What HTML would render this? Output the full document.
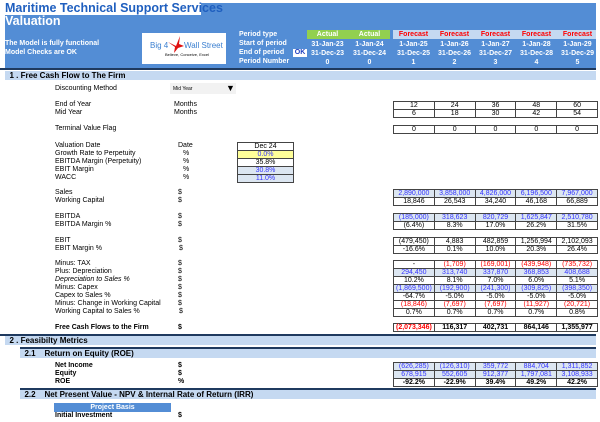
<!DOCTYPE html>
<html><head><meta charset="utf-8"><style>
*{margin:0;padding:0;box-sizing:border-box}
body{width:600px;height:422px;background:#fff;font-family:"Liberation Sans",Arial,sans-serif;font-size:7px;color:#000;position:relative;overflow:hidden}
.a{position:absolute;white-space:nowrap;line-height:8px}
.b{font-weight:bold}
.w{color:#fff}
table.t{position:absolute;left:393px;border-collapse:collapse}
table.t td{width:40.8px;height:8px;border:1px solid #444;text-align:center;font-size:7px;line-height:6px;padding:0}
.bl{color:#3333ff;background:#dce6f1}
.rd{color:#ff0000}
.bar{position:absolute;left:5px;width:591px;background:#c5d9f1;font-weight:bold;font-size:8px;line-height:9px}
.ln{position:absolute;left:0;width:596px;height:2px;background:#1f3a5f}
.hc{position:absolute;width:41px;text-align:center;font-weight:bold;color:#fff;line-height:9px}
</style></head><body>
<div style="position:absolute;left:5px;top:3px;width:591px;height:65px;background:#538dd5"></div>
<div class="a b" style="left:5px;top:2px;height:13px;width:196px;background:#fff;color:#1f5fbf;font-size:12.5px;line-height:13px">Maritime Technical Support Services</div>
<div class="a b w" style="left:5px;top:15px;font-size:12.5px;line-height:12px">Valuation</div>
<div class="a b w" style="left:5px;top:40px">The Model is fully functional</div>
<div class="a b w" style="left:5px;top:49px">Model Checks are OK</div>
<div style="position:absolute;left:142px;top:33px;width:84px;height:31px;background:#fff"></div>
<div class="a" style="left:150px;top:42px;color:#3a7fd0;font-size:8px">Big 4</div>
<div class="a" style="left:184px;top:42px;color:#3a7fd0;font-size:8px">Wall Street</div>
<svg style="position:absolute;left:166px;top:34px" width="20" height="20"><path d="M2 8 L10 12 L14 2 L13 10 L18 12 L12 14 L8 19 L9 13 Z" fill="#e01010"/></svg>
<div class="a" style="left:165px;top:52px;font-size:4px;line-height:5px">Believe, Conceive, Excel</div>
<div class="a b w" style="left:239px;top:31px">Period type</div>
<div class="a b w" style="left:239px;top:40px">Start of period</div>
<div class="a b w" style="left:239px;top:49px">End of period</div>
<div class="a b w" style="left:239px;top:58px">Period Number</div>
<div class="a b" style="left:293px;top:49px;width:14px;background:#fff;color:#1f3fbf;text-align:center">OK</div>
<div style="position:absolute;left:307px;top:30px;width:83px;height:9px;background:#92d050"></div>
<div style="position:absolute;left:393px;top:30px;width:203px;height:9px;background:#c5d9f1"></div>
<div class="hc" style="left:307px;top:30px">Actual</div><div class="hc" style="left:349px;top:30px">Actual</div>
<div class="hc" style="left:393px;top:30px;color:#f00">Forecast</div><div class="hc" style="left:434px;top:30px;color:#f00">Forecast</div><div class="hc" style="left:475px;top:30px;color:#f00">Forecast</div><div class="hc" style="left:516px;top:30px;color:#f00">Forecast</div><div class="hc" style="left:557px;top:30px;color:#f00">Forecast</div>
<div class="hc" style="left:307px;top:40px">31-Jan-23</div><div class="hc" style="left:349px;top:40px">1-Jan-24</div><div class="hc" style="left:393px;top:40px">1-Jan-25</div><div class="hc" style="left:434px;top:40px">1-Jan-26</div><div class="hc" style="left:475px;top:40px">1-Jan-27</div><div class="hc" style="left:516px;top:40px">1-Jan-28</div><div class="hc" style="left:557px;top:40px">1-Jan-29</div>
<div class="hc" style="left:307px;top:49px">31-Dec-23</div><div class="hc" style="left:349px;top:49px">31-Dec-24</div><div class="hc" style="left:393px;top:49px">31-Dec-25</div><div class="hc" style="left:434px;top:49px">31-Dec-26</div><div class="hc" style="left:475px;top:49px">31-Dec-27</div><div class="hc" style="left:516px;top:49px">31-Dec-28</div><div class="hc" style="left:557px;top:49px">31-Dec-29</div>
<div class="hc" style="left:307px;top:58px">0</div><div class="hc" style="left:349px;top:58px">0</div><div class="hc" style="left:393px;top:58px">1</div><div class="hc" style="left:434px;top:58px">2</div><div class="hc" style="left:475px;top:58px">3</div><div class="hc" style="left:516px;top:58px">4</div><div class="hc" style="left:557px;top:58px">5</div>

<div class="ln" style="top:68px"></div>
<div class="bar" style="top:71px;height:9px">&nbsp; 1 . Free Cash Flow to The Firm</div>
<div class="a" style="left:55px;top:85px">Discounting Method</div>
<div style="position:absolute;left:170px;top:83px;width:66px;height:11px;background:#f2f2f2"></div>
<div class="a" style="left:173px;top:85px;font-size:5px">Mid Year</div>
<div class="a" style="left:226px;top:84px;font-size:9px">▼</div>

<div class="a" style="left:55px;top:101px">End of Year</div><div class="a" style="left:174px;top:101px">Months</div>
<div class="a" style="left:55px;top:109px">Mid Year</div><div class="a" style="left:174px;top:109px">Months</div>
<table class="t" style="top:101px"><tr><td>12</td><td>24</td><td>36</td><td>48</td><td>60</td></tr><tr><td>6</td><td>18</td><td>30</td><td>42</td><td>54</td></tr></table>
<div class="a" style="left:55px;top:125px">Terminal Value Flag</div>
<table class="t" style="top:125px"><tr><td>0</td><td>0</td><td>0</td><td>0</td><td>0</td></tr></table>

<div class="a" style="left:55px;top:142px">Valuation Date</div><div class="a" style="left:178px;top:142px">Date</div>
<div class="a" style="left:55px;top:150px">Growth Rate to Perpetuity</div><div class="a" style="left:183px;top:150px">%</div>
<div class="a" style="left:55px;top:158px">EBITDA Margin (Perpetuity)</div><div class="a" style="left:183px;top:158px">%</div>
<div class="a" style="left:55px;top:166px">EBIT Margin</div><div class="a" style="left:183px;top:166px">%</div>
<div class="a" style="left:55px;top:174px">WACC</div><div class="a" style="left:183px;top:174px">%</div>
<table class="t" style="top:142px;left:237px"><tr><td style="width:56px">Dec 24</td></tr><tr><td style="background:#ffff99;color:#3333ff">0.0%</td></tr><tr><td>35.8%</td></tr><tr><td class="bl">30.8%</td></tr><tr><td class="bl">11.0%</td></tr></table>

<div class="a" style="left:55px;top:189px">Sales</div><div class="a" style="left:178px;top:189px">$</div>
<div class="a" style="left:55px;top:197px">Working Capital</div><div class="a" style="left:178px;top:197px">$</div>
<table class="t" style="top:189px"><tr class="bl"><td>2,890,000</td><td>3,858,000</td><td>4,826,000</td><td>6,196,500</td><td>7,967,000</td></tr><tr><td>18,846</td><td>26,543</td><td>34,240</td><td>46,168</td><td>66,889</td></tr></table>
<div class="a" style="left:55px;top:213px">EBITDA</div><div class="a" style="left:178px;top:213px">$</div>
<div class="a" style="left:55px;top:221px">EBITDA Margin %</div><div class="a" style="left:178px;top:221px">$</div>
<table class="t" style="top:213px"><tr class="bl"><td>(185,000)</td><td>318,623</td><td>820,729</td><td>1,625,847</td><td>2,510,780</td></tr><tr><td>(6.4%)</td><td>8.3%</td><td>17.0%</td><td>26.2%</td><td>31.5%</td></tr></table>
<div class="a" style="left:55px;top:237px">EBIT</div><div class="a" style="left:178px;top:237px">$</div>
<div class="a" style="left:55px;top:245px">EBIT Margin %</div><div class="a" style="left:179px;top:245px">$</div>
<table class="t" style="top:237px"><tr><td>(479,450)</td><td>4,883</td><td>482,859</td><td>1,256,994</td><td>2,102,093</td></tr><tr><td>-16.6%</td><td>0.1%</td><td>10.0%</td><td>20.3%</td><td>26.4%</td></tr></table>

<div class="a" style="left:55px;top:260px">Minus: TAX</div><div class="a" style="left:178px;top:260px">$</div>
<div class="a" style="left:55px;top:268px">Plus: Depreciation</div><div class="a" style="left:178px;top:268px">$</div>
<div class="a" style="left:55px;top:276px;font-style:italic">Depreciation to Sales %</div><div class="a" style="left:178px;top:276px">$</div>
<div class="a" style="left:55px;top:284px">Minus: Capex</div><div class="a" style="left:178px;top:284px">$</div>
<div class="a" style="left:55px;top:292px">Capex to Sales %</div><div class="a" style="left:178px;top:292px">$</div>
<div class="a" style="left:55px;top:300px">Minus: Change in Working Capital</div><div class="a" style="left:178px;top:300px">$</div>
<div class="a" style="left:55px;top:308px">Working Capital to Sales %</div><div class="a" style="left:179px;top:308px">$</div>
<table class="t" style="top:260px">
<tr><td>-</td><td class="rd">(1,709)</td><td class="rd">(169,001)</td><td class="rd">(439,948)</td><td class="rd">(735,732)</td></tr>
<tr class="bl"><td>294,450</td><td>313,740</td><td>337,870</td><td>368,853</td><td>408,688</td></tr>
<tr><td>10.2%</td><td>8.1%</td><td>7.0%</td><td>6.0%</td><td>5.1%</td></tr>
<tr class="bl"><td>(1,869,500)</td><td>(192,900)</td><td>(241,300)</td><td>(309,825)</td><td>(398,350)</td></tr>
<tr><td>-64.7%</td><td>-5.0%</td><td>-5.0%</td><td>-5.0%</td><td>-5.0%</td></tr>
<tr class="rd"><td>(18,846)</td><td>(7,697)</td><td>(7,697)</td><td>(11,927)</td><td>(20,721)</td></tr>
<tr><td>0.7%</td><td>0.7%</td><td>0.7%</td><td>0.7%</td><td>0.8%</td></tr></table>
<div class="a b" style="left:55px;top:324px">Free Cash Flows to the Firm</div><div class="a b" style="left:178px;top:324px">$</div>
<table class="t b" style="top:323px"><tr><td class="rd">(2,073,346)</td><td>116,317</td><td>402,731</td><td>864,146</td><td>1,355,977</td></tr></table>

<div class="ln" style="top:334px"></div>
<div class="bar" style="top:336px;height:9px">&nbsp; 2 . Feasibilty Metrics</div>
<div class="ln" style="top:347px;left:20px;width:576px"></div>
<div class="bar" style="top:349px;height:9px;left:20px;width:576px">&nbsp; 2.1 &nbsp;&nbsp; Return on Equity (ROE)</div>
<div class="a b" style="left:55px;top:362px">Net Income</div><div class="a b" style="left:178px;top:362px">$</div>
<div class="a b" style="left:55px;top:370px">Equity</div><div class="a b" style="left:178px;top:370px">$</div>
<div class="a b" style="left:55px;top:378px">ROE</div><div class="a b" style="left:178px;top:378px">%</div>
<table class="t" style="top:362px"><tr class="bl"><td>(626,285)</td><td>(126,310)</td><td>359,772</td><td>884,704</td><td>1,311,852</td></tr><tr class="bl"><td>678,915</td><td>552,605</td><td>912,377</td><td>1,797,081</td><td>3,108,933</td></tr><tr class="b"><td>-92.2%</td><td>-22.9%</td><td>39.4%</td><td>49.2%</td><td>42.2%</td></tr></table>
<div class="ln" style="top:388px;left:20px;width:576px"></div>
<div class="bar" style="top:390px;height:9px;left:20px;width:576px">&nbsp; 2.2 &nbsp;&nbsp; Net Present Value - NPV &amp; Internal Rate of Return (IRR)</div>
<div class="a b w" style="left:54px;top:403px;width:117px;height:9px;background:#538dd5;text-align:center;line-height:9px">Project Basis</div>
<div class="a b" style="left:55px;top:412px">Initial Investment</div><div class="a b" style="left:178px;top:412px">$</div>
</body></html>
